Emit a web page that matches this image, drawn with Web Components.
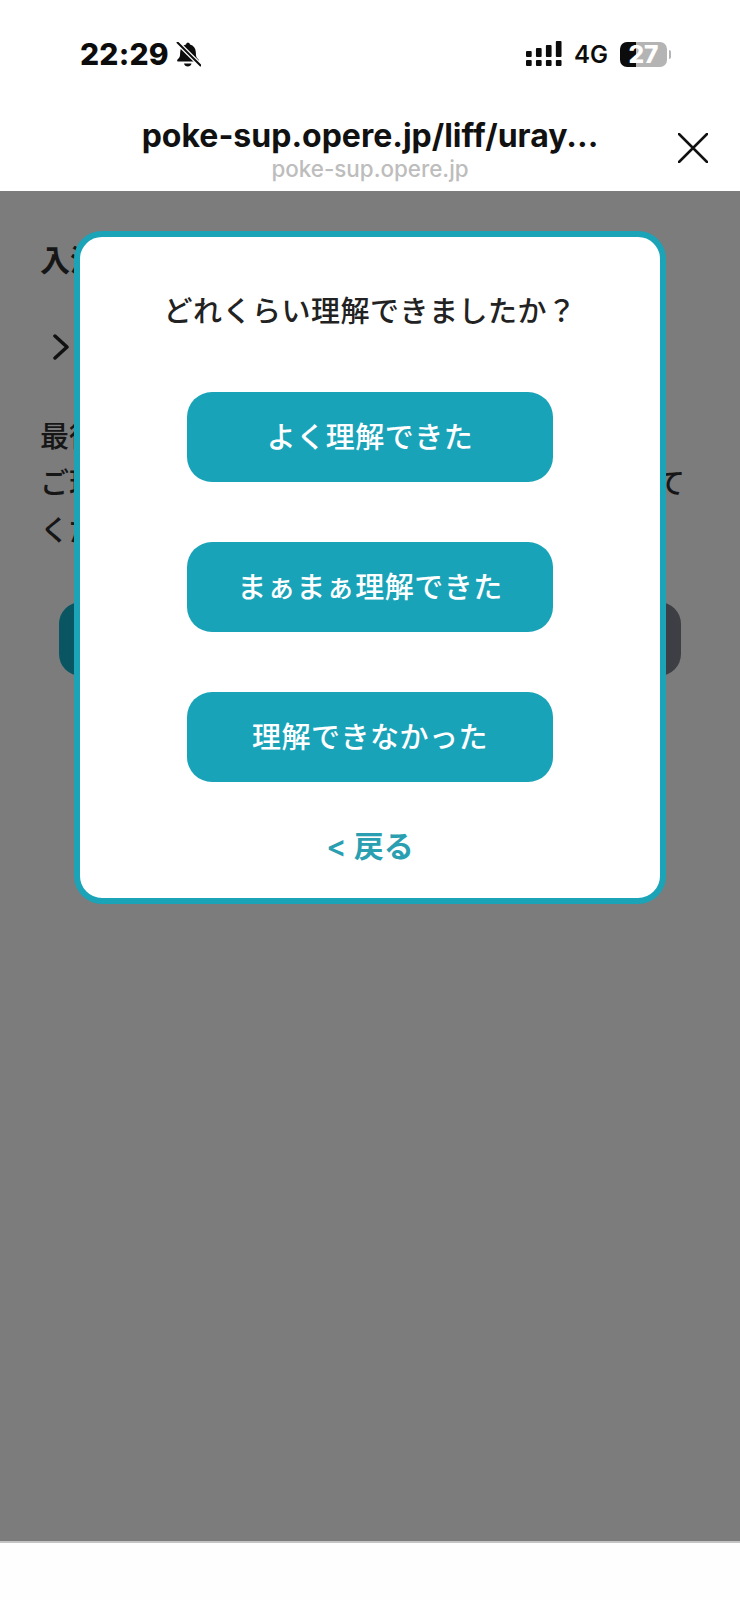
<!DOCTYPE html>
<html lang="ja">
<head>
<meta charset="utf-8">
<title>poke-sup</title>
<style>
  html, body { margin: 0; padding: 0; background: #fff; }
  body { width: 740px; height: 1600px; overflow: hidden; font-family: Inter, "Noto Sans CJK JP", sans-serif; display: flex; flex-direction: column; }
</style>
</head>
<body>
<status-bar time="22:29" network="4G" battery="27"></status-bar>
<browser-header title="poke-sup.opere.jp/liff/uray..." host="poke-sup.opere.jp"></browser-header>
<dimmed-page>
  <quiz-dialog heading="どれくらい理解できましたか？" back="&lt; 戻る">
    <answer-button>よく理解できた</answer-button>
    <answer-button>まぁまぁ理解できた</answer-button>
    <answer-button>理解できなかった</answer-button>
  </quiz-dialog>
</dimmed-page>
<page-footer></page-footer>

<script>
customElements.define(
  "status-bar",
  class StatusBar extends HTMLElement {
    constructor() {
      super();
      this.attachShadow({mode: "open"});
    }

    connectedCallback() {
      this.shadowRoot.innerHTML = `
      <style>
        :host {
            display: flex;
            justify-content: space-between;
            align-items: center;
            height: 95px;
            padding: 13px 69px 0 80px;
            box-sizing: border-box;
            color: #0c0c0c;
        }
        .left, .right {
            display: flex;
            align-items: center;
        }
        .time {
            font: 800 30px/1 Inter, sans-serif;
            letter-spacing: .2px;
        }
        .bell {
            margin-left: 7px;
        }
        .net {
            font: 600 24px/1 Inter, sans-serif;
            margin: 2px 12px 0 12px;
        }
        .battery {
            display: flex;
            align-items: center;
            justify-content: center;
            width: 47px;
            height: 25px;
            border-radius: 7px;
            background: linear-gradient(90deg, #0c0c0c 0 16px, #b4b4b4 16px);
            color: #fff;
            font: 800 24.500px/1 Inter, sans-serif;
        }
        .nub {
            width: 2px;
            height: 9px;
            margin-left: 2px;
            border-radius: 0 2px 2px 0;
            background: #b4b4b4;
        }
      </style>
      <div class="left">
        <span class="time">${this.getAttribute("time")}</span>
        <svg class="bell" width="25" height="25" viewBox="0 0 25 25">
          <path d="M11.500 .5c1.300 0 2.300.9 2.500 2.100 3.600 1 5.600 3.800 5.800 7.300l.2 3.300c.1 1.600 1 2.800 2.500 4.200.8.800.3 2.100-.8 2.100H2.300c-1.100 0-1.600-1.300-.8-2.100 1.500-1.400 2.400-2.600 2.500-4.200l.2-3.300c.2-3.500 2.100-6.300 5.800-7.300.2-1.200 1.200-2.100 2.500-2.100z" fill="#0c0c0c"/>
          <path d="M8 21.500h7.500c-.3 1.800-1.900 3-3.750 3S8.300 23.300 8 21.500z" fill="#0c0c0c"/>
          <path d="M1 0l24 24" stroke="#fff" stroke-width="4.500"/>
          <path d="M1 0l24 24" stroke="#0c0c0c" stroke-width="2"/>
        </svg>
      </div>
      <div class="right">
        <svg width="36" height="26" viewBox="0 0 38 26" preserveAspectRatio="none" fill="#0c0c0c">
          <rect x="0" y="10" width="6" height="6" rx="1"/><rect x="0" y="19" width="6" height="6" rx="1"/>
          <rect x="10.500" y="7" width="6" height="9" rx="1"/><rect x="10.500" y="19" width="6" height="6" rx="1"/>
          <rect x="21" y="4" width="6" height="12" rx="1"/><rect x="21" y="19" width="6" height="6" rx="1"/>
          <rect x="31.500" y="0" width="6" height="16" rx="1"/><rect x="31.500" y="19" width="6" height="6" rx="1"/>
        </svg>
        <span class="net">${this.getAttribute("network")}</span>
        <span class="battery">${this.getAttribute("battery")}</span>
        <span class="nub"></span>
      </div>
      `;
    }
  }
);

customElements.define(
  "browser-header",
  class BrowserHeader extends HTMLElement {
    constructor() {
      super();
      this.attachShadow({mode: "open"});
    }

    connectedCallback() {
      this.shadowRoot.innerHTML = `
      <style>
        :host {
            position: relative;
            display: flex;
            flex-direction: column;
            align-items: center;
            height: 96px;
            padding-top: 20px;
            box-sizing: border-box;
        }
        .title {
            font: 700 32px/41px Inter, sans-serif;
            color: #111;
        }
        .host {
            font: 500 22.400px/26px Inter, sans-serif;
            color: #bdbdbd;
        }
        .close {
            position: absolute;
            left: 678px;
            top: 38px;
        }
      </style>
      <div class="title">${this.getAttribute("title")}</div>
      <div class="host">${this.getAttribute("host")}</div>
      <svg class="close" width="30" height="30" viewBox="0 0 30 30">
        <path d="M1 1l28 28M29 1L1 29" stroke="#111" stroke-width="2.500" stroke-linecap="round"/>
      </svg>
      `;
    }
  }
);

customElements.define(
  "dimmed-page",
  class DimmedPage extends HTMLElement {
    constructor() {
      super();
      this.attachShadow({mode: "open"});
    }

    connectedCallback() {
      this.shadowRoot.innerHTML = `
      <style>
        :host {
            position: relative;
            display: flex;
            flex-direction: column;
            height: 1352px;
            padding: 49px 55px 0 40px;
            box-sizing: border-box;
            background: #7c7c7c;
            color: #161616;
            font-family: Inter, "Noto Sans CJK JP", sans-serif;
            border-bottom: 2px solid #c4c4c4;
        }
        h1 {
            margin: 0;
            font-size: 30px;
            font-weight: 700;
            line-height: 40px;
        }
        .chevron {
            margin: 54px 0 0 13px;
        }
        .text {
            margin-top: 53px;
            font-size: 29px;
            font-weight: 500;
            line-height: 47px;
        }
        .row {
            display: flex;
            justify-content: space-between;
        }
        .action {
            height: 74px;
            margin: 48px 4px 0 19px;
            border-radius: 22px;
            background: linear-gradient(90deg, #0a5562 0 50%, #3d3f45 50%);
        }
        ::slotted(quiz-dialog) {
            position: absolute;
            left: 74px;
            top: 40px;
        }
      </style>
      <h1>入浴</h1>
      <svg class="chevron" width="16" height="26" viewBox="0 0 16 26">
        <path d="M2 2l12 11L2 24" fill="none" stroke="#111" stroke-width="3.500" stroke-linecap="round" stroke-linejoin="round"/>
      </svg>
      <div class="text">
        <div class="row"><span>最後</span></div>
        <div class="row"><span>ご理</span><span>て</span></div>
        <div class="row"><span>くだ</span></div>
      </div>
      <div class="action"></div>
      <slot></slot>
      `;
    }
  }
);

customElements.define(
  "quiz-dialog",
  class QuizDialog extends HTMLElement {
    constructor() {
      super();
      this.attachShadow({mode: "open"});
    }

    connectedCallback() {
      this.shadowRoot.innerHTML = `
      <style>
        :host {
            display: flex;
            flex-direction: column;
            align-items: center;
            width: 592px;
            height: 673px;
            box-sizing: border-box;
            padding-top: 55px;
            border: 6px solid #1ba3b8;
            border-radius: 28px;
            background: #fff;
        }
        .heading {
            font: 500 29px/40px Inter, "Noto Sans CJK JP", sans-serif;
            letter-spacing: .5px;
            color: #222;
            white-space: nowrap;
        }
        .answers {
            display: flex;
            flex-direction: column;
            gap: 60px;
            margin-top: 60px;
        }
        .back {
            margin-top: 44px;
            font: 600 30px/40px Inter, "Noto Sans CJK JP", sans-serif;
            color: #2a9fb2;
        }
      </style>
      <div class="heading">${this.getAttribute("heading")}</div>
      <div class="answers"><slot></slot></div>
      <div class="back">${this.getAttribute("back").replace("<", "&lt;")}</div>
      `;
    }
  }
);

customElements.define(
  "answer-button",
  class AnswerButton extends HTMLElement {
    constructor() {
      super();
      this.attachShadow({mode: "open"});
    }

    connectedCallback() {
      this.shadowRoot.innerHTML = `
      <style>
        :host {
            display: flex;
            justify-content: center;
            align-items: center;
            width: 366px;
            height: 90px;
            border-radius: 25px;
            background: #19a3b8;
            color: #fff;
            font: 500 29px/1 Inter, "Noto Sans CJK JP", sans-serif;
            letter-spacing: .5px;
        }
      </style>
      <slot></slot>
      `;
    }
  }
);

customElements.define(
  "page-footer",
  class PageFooter extends HTMLElement {
    constructor() {
      super();
      this.attachShadow({mode: "open"});
    }

    connectedCallback() {
      this.shadowRoot.innerHTML = `
      <style>
        :host {
            display: block;
            flex: 1;
            background: #fefefe;
        }
      </style>
      `;
    }
  }
);
</script>
</body>
</html>
